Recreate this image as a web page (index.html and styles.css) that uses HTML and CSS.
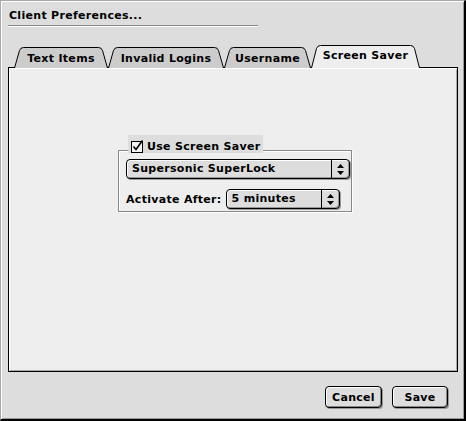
FILE: index.html
```html
<!DOCTYPE html>
<html lang="en">
<head>
    <meta charset="UTF-8">
    <title>Client Preferences</title>
    <link rel="stylesheet" href="styles.css">
</head>
<body>
    <div class="window">
        <div class="title">Client Preferences...</div>
        <div class="title-rule"></div>

        <div class="tabs">
            <div class="tab" style="width: 94px;">
                <svg class="tab-shape" width="94" height="21" viewBox="0 0 94 21"><path d="M0.5 21 L5.5 3.5 Q6.5 0.5 9.5 0.5 L84.5 0.5 Q87.5 0.5 88.5 3.5 L93.5 21" /></svg>
                <span>Text Items</span>
            </div>
            <div class="tab" style="width: 116px;">
                <svg class="tab-shape" width="116" height="21" viewBox="0 0 116 21"><path d="M0.5 21 L5.5 3.5 Q6.5 0.5 9.5 0.5 L106.5 0.5 Q109.5 0.5 110.5 3.5 L115.5 21" /></svg>
                <span>Invalid Logins</span>
            </div>
            <div class="tab" style="width: 87px;">
                <svg class="tab-shape" width="87" height="21" viewBox="0 0 87 21"><path d="M0.5 21 L5.5 3.5 Q6.5 0.5 9.5 0.5 L77.5 0.5 Q80.5 0.5 81.5 3.5 L86.5 21" /></svg>
                <span>Username</span>
            </div>
            <div class="tab tab-active" style="width: 109px;">
                <svg class="tab-shape" width="109" height="23" viewBox="0 0 109 23"><path d="M0.5 23 L5.5 3.5 Q6.5 0.5 9.5 0.5 L99.5 0.5 Q102.5 0.5 103.5 3.5 L108.5 23" /></svg>
                <span>Screen Saver</span>
            </div>
        </div>

        <div class="panel">
            <div class="saver">
                <div class="legend">
                    <svg class="check" width="13" height="13" viewBox="0 0 13 13">
                        <rect x="0.5" y="1.5" width="11" height="11" fill="#f4f4f4" stroke="#000" />
                        <path d="M2.5 6.5 L5 9.5 L11.5 0.5" fill="none" stroke="#000" stroke-width="1.6" />
                    </svg>
                    <span>Use Screen Saver</span>
                </div>
                <div class="group">
                    <div class="popup popup-wide">
                        <span class="popup-text">Supersonic SuperLock</span>
                        <span class="popup-arrows">
                            <svg width="7" height="11" viewBox="0 0 7 11"><path d="M3.5 0 L7 4 L0 4 Z M0 7 L7 7 L3.5 11 Z" /></svg>
                        </span>
                    </div>
                    <div class="row">
                        <span class="label">Activate After:</span>
                        <div class="popup popup-short">
                            <span class="popup-text">5 minutes</span>
                            <span class="popup-arrows">
                                <svg width="7" height="11" viewBox="0 0 7 11"><path d="M3.5 0 L7 4 L0 4 Z M0 7 L7 7 L3.5 11 Z" /></svg>
                            </span>
                        </div>
                    </div>
                </div>
            </div>
        </div>

        <div class="footer">
            <button class="btn btn-cancel">Cancel</button>
            <button class="btn btn-save">Save</button>
        </div>
    </div>
</body>
</html>
```

FILE: styles.css
```css
body {
    margin: 0;
    padding: 0;
    background-color: #dddddd;
    font-family: 'DejaVu Sans', 'Liberation Sans', sans-serif;
    font-weight: bold;
    font-size: 11px;
    letter-spacing: 0.3px;
    color: #000;
}

.window {
    width: 466px;
    height: 421px;
    box-sizing: border-box;
    background-color: #dddddd;
    border-top: 1px solid #a8a8a8;
    border-left: 1px solid #a8a8a8;
    border-right: 2px solid #000;
    border-bottom: 2px solid #000;
    box-shadow: inset 1px 1px 0 #fff, inset -1px -1px 0 #999;
    padding: 0 6px 0 7px;
    display: flex;
    flex-direction: column;
}

.title {
    height: 16px;
    line-height: 16px;
    margin-top: 7px;
    padding-left: 1px;
}

.title-rule {
    width: 250px;
    margin-top: 1px;
    border-top: 1px solid #888;
    border-bottom: 1px solid #fff;
}

.tabs {
    display: flex;
    align-items: flex-end;
    height: 23px;
    margin-top: 18px;
    margin-left: 6px;
    margin-bottom: -1px;
    position: relative;
    z-index: 1;
}

.tab {
    position: relative;
    height: 21px;
    display: flex;
    align-items: center;
    justify-content: center;
    padding-top: 1px;
    box-sizing: border-box;
}

.tab-shape {
    position: absolute;
    left: 0;
    top: 0;
}

.tab-shape path {
    fill: #cccccc;
    stroke: #000;
    stroke-width: 1;
}

.tab span {
    position: relative;
}

.tab-active {
    height: 23px;
    padding-top: 0;
    padding-bottom: 2px;
}

.tab-active .tab-shape path {
    fill: #eeeeee;
}

.panel {
    height: 305px;
    box-sizing: border-box;
    background-color: #eeeeee;
    border: 1px solid #000;
    box-shadow: inset 1px 1px 0 #fff, inset -1px -1px 0 #aaa;
    display: flex;
    flex-direction: column;
}

.saver {
    margin-top: 67px;
    margin-left: 109px;
    width: 234px;
}

.legend {
    position: relative;
    z-index: 1;
    display: flex;
    align-items: flex-end;
    gap: 3px;
    width: fit-content;
    height: 18px;
    box-sizing: border-box;
    margin-left: 10px;
    padding: 0 3px;
    background-color: #dddddd;
    margin-bottom: -3px;
    line-height: 13px;
}

.check {
    display: block;
}

.group {
    height: 62px;
    box-sizing: border-box;
    border: 1px solid #888;
    box-shadow: 1px 1px 0 #fff, inset 1px 1px 0 #fff;
    padding: 8px 0 0 7px;
}

.popup {
    height: 20px;
    box-sizing: border-box;
    display: flex;
    align-items: stretch;
    border: 1px solid #000;
    border-radius: 4px;
    background-color: #dddddd;
    box-shadow: inset 1px 1px 0 #fff, inset -1px -1px 0 #999, 1px 1px 0 #999;
}

.popup-wide {
    width: 224px;
}

.popup-short {
    width: 114px;
}

.popup-text {
    flex: 1;
    padding-left: 5px;
    line-height: 18px;
}

.popup-arrows {
    width: 17px;
    border-left: 1px solid #000;
    display: flex;
    align-items: center;
    justify-content: center;
}

.row {
    display: flex;
    align-items: center;
    gap: 4px;
    margin-top: 10px;
}

.footer {
    display: flex;
    justify-content: flex-end;
    gap: 10px;
    margin-top: 14px;
    padding-right: 10px;
}

.btn {
    height: 22px;
    box-sizing: border-box;
    font-family: inherit;
    font-weight: bold;
    font-size: 11px;
    letter-spacing: 0.3px;
    color: #000;
    background-color: #dddddd;
    border: 1px solid #000;
    border-radius: 4px;
    box-shadow: inset 1px 1px 0 #fff, inset -1px -1px 0 #888, 1px 1px 0 #999;
    padding: 0;
}

.btn-cancel {
    width: 57px;
}

.btn-save {
    width: 56px;
}
```
